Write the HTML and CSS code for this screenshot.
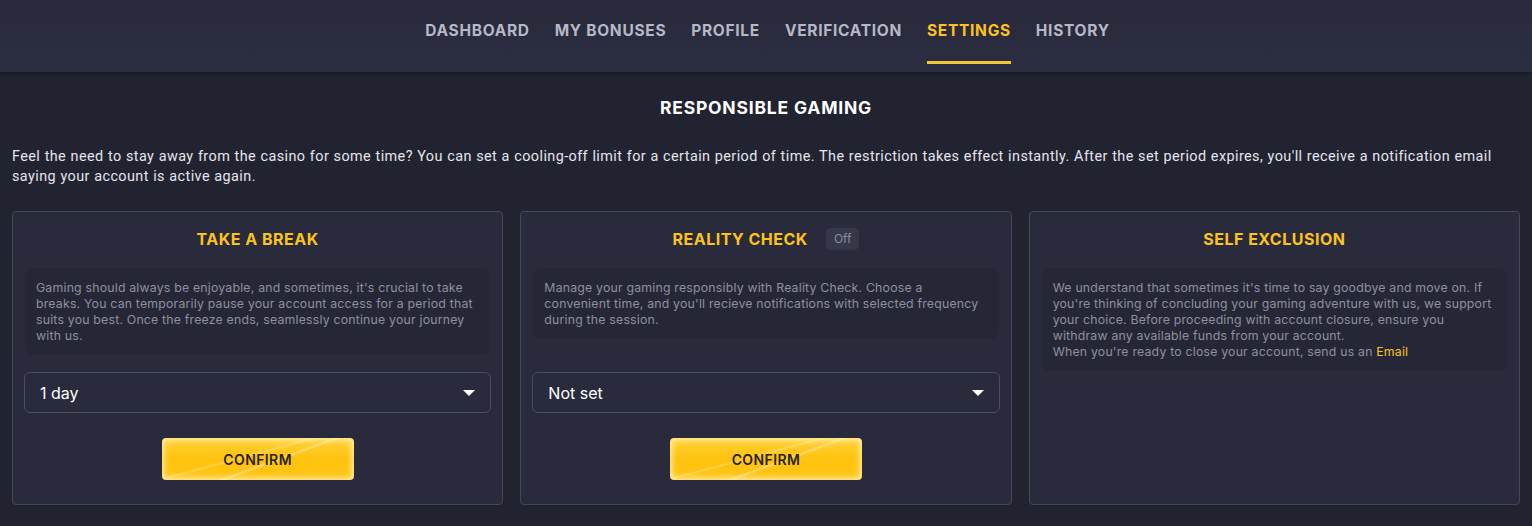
FILE: index.html
```html
<!DOCTYPE html>
<html lang="en">
<head>
<meta charset="utf-8">
<title>Responsible Gaming</title>
<link rel="stylesheet" href="styles.css">
</head>
<body>
<nav class="tabs">
  <a class="tab">DASHBOARD</a>
  <a class="tab">MY BONUSES</a>
  <a class="tab">PROFILE</a>
  <a class="tab">VERIFICATION</a>
  <a class="tab active">SETTINGS</a>
  <a class="tab">HISTORY</a>
</nav>
<main class="content">
  <h1 class="page-title">RESPONSIBLE GAMING</h1>
  <p class="intro">Feel the need to stay away from the casino for some time? You can set a cooling-off limit for a certain period of time. The restriction takes effect instantly. After the set period expires, you'll receive a notification email<br>saying your account is active again.</p>
  <div class="cards">
    <section class="card">
      <h2 class="card-title">TAKE A BREAK</h2>
      <div class="desc-area">
        <div class="desc">Gaming should always be enjoyable, and sometimes, it's crucial to take breaks. You can temporarily pause your account access for a period that suits you best. Once the freeze ends, seamlessly continue your journey with us.</div>
      </div>
      <div class="select"><span>1 day</span><span class="caret"></span></div>
      <button class="confirm">CONFIRM</button>
    </section>
    <section class="card">
      <h2 class="card-title">REALITY CHECK <span class="badge">Off</span></h2>
      <div class="desc-area">
        <div class="desc">Manage your gaming responsibly with Reality Check. Choose a convenient time, and you'll recieve notifications with selected frequency during the session.</div>
      </div>
      <div class="select"><span>Not set</span><span class="caret"></span></div>
      <button class="confirm">CONFIRM</button>
    </section>
    <section class="card">
      <h2 class="card-title">SELF EXCLUSION</h2>
      <div class="desc-area">
        <div class="desc">We understand that sometimes it's time to say goodbye and move on. If you're thinking of concluding your gaming adventure with us, we support your choice. Before proceeding with account closure, ensure you withdraw any available funds from your account.<br>When you're ready to close your account, send us an <a class="link">Email</a></div>
      </div>
    </section>
  </div>
</main>
</body>
</html>
```
FILE: styles.css
```css
* { box-sizing: border-box; }
html, body { margin: 0; padding: 0; }
body {
  background: #222330;
  font-family: "Inter", "Noto Sans", sans-serif;
  color: #fff;
  width: 1532px;
  height: 526px;
  overflow: hidden;
}
.tabs {
  height: 72px;
  background: linear-gradient(#292a3b, #2b2d41);
  display: flex;
  justify-content: center;
  gap: 25px;
  box-shadow: 0 2px 3px rgba(0,0,0,0.25);
  padding-left: 3px;
}
.tab {
  font-size: 15.5px;
  font-weight: 700;
  color: #b6b8c8;
  padding-top: 21px;
  height: 64px;
  border-bottom: 3px solid transparent;
  letter-spacing: 0.7px;
}
.tab.active { color: #fcc31e; border-bottom-color: #f0c93a; }
.content { padding: 0 12px; }
.page-title {
  margin: 0;
  padding-top: 26px;
  text-align: center;
  font-size: 17.5px;
  font-weight: 700;
  line-height: 20px;
  height: 46px;
  letter-spacing: 0.8px;
}
.intro {
  margin: 0;
  padding-top: 29px;
  font-family: "Roboto", "Inter", sans-serif;
  font-size: 14.4px;
  line-height: 20px;
  color: #e4e5ee;
  letter-spacing: 0.42px;
  word-spacing: 0.4px;
}
.cards {
  margin-top: 24px;
  display: grid;
  grid-template-columns: 1fr 1fr 1fr;
  gap: 17px;
}
.card {
  height: 294px;
  border: 1px solid #44465a;
  border-radius: 4px;
  background: #292a3b;
  padding: 11px 11px 0;
  display: flex;
  flex-direction: column;
  align-items: stretch;
}
.card-title {
  margin: 0 0 13px;
  height: 32px;
  display: flex;
  align-items: center;
  justify-content: center;
  color: #fcc31e;
  font-size: 16px;
  font-weight: 700;
  letter-spacing: 0.5px;
}
.badge {
  margin-left: 18px;
  background: #363849;
  color: #8a8c9c;
  font-size: 12px;
  font-weight: 400;
  letter-spacing: 0;
  border-radius: 5px;
  padding: 0 8px;
  height: 22px;
  line-height: 22px;
}
.desc-area {
  height: 104px;
  padding: 0 1px;
}
.desc {
  background: #262736;
  border-radius: 8px;
  padding: 12px 11px 11px;
  font-size: 12.3px;
  line-height: 16px;
  color: #8d8fa1;
  letter-spacing: 0.2px;
}
.link { color: #fcc31e; }
.select {
  height: 41px;
  border: 1px solid #4a4c60;
  border-radius: 6px;
  display: flex;
  align-items: center;
  justify-content: space-between;
  padding: 0 15px;
  font-size: 16px;
  color: #fff;
}
.caret {
  width: 0; height: 0;
  border-left: 6px solid transparent;
  border-right: 6px solid transparent;
  border-top: 6px solid #fff;
}
.confirm {
  align-self: center;
  margin-top: 25px;
  width: 192px;
  height: 42px;
  border: none;
  border-radius: 4px;
  font-family: inherit;
  font-size: 14px;
  font-weight: 600;
  letter-spacing: 0.4px;
  color: #2a2416;
  background:
    linear-gradient(160deg, transparent 55%, rgba(255,255,255,0.35) 57%, transparent 59%),
    linear-gradient(165deg, transparent 42%, rgba(255,255,255,0.25) 44%, transparent 46%),
    linear-gradient(#ffd23a, #ffc20e 50%, #ffc515);
  box-shadow: inset 0 0 6px 2px rgba(255,245,190,0.85);
}
```
